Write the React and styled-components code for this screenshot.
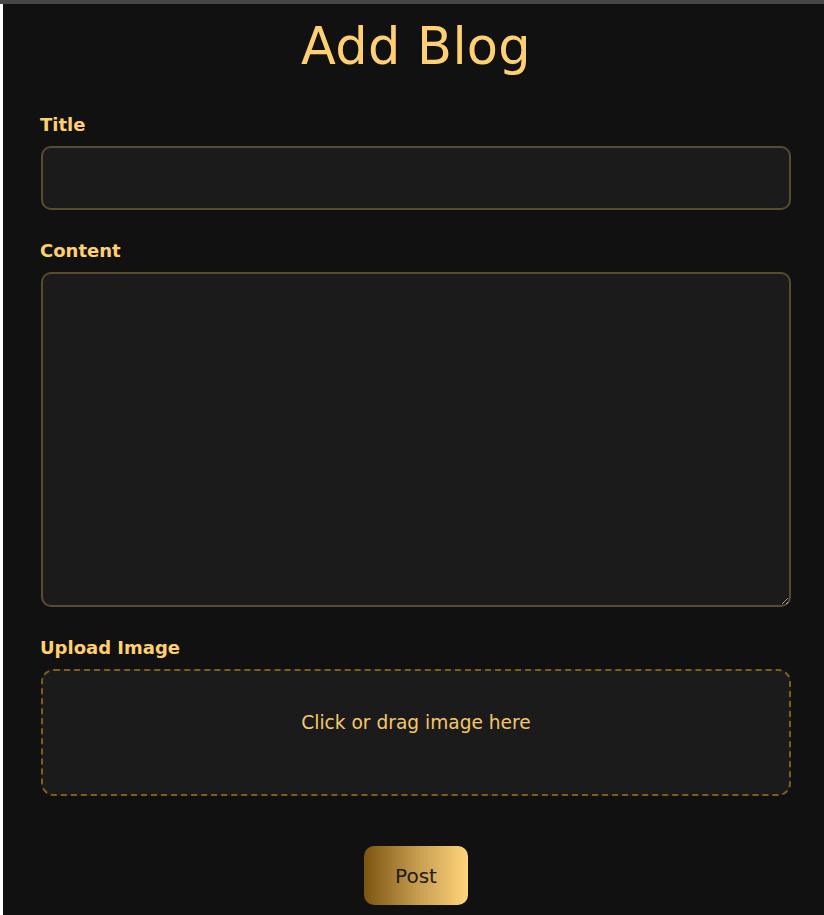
import React from "react";
import styled, { createGlobalStyle } from "styled-components";

const Global = createGlobalStyle`
  html, body { margin: 0; padding: 0; background: #ffffff; }
  body { font-family: "DejaVu Sans", "Noto Sans", sans-serif; overflow: hidden; }
  * { box-sizing: border-box; }
`;

const TopBar = styled.div`
  height: 4px;
  background: #474747;
`;

const Page = styled.main`
  margin-left: 3px;
  min-height: 911px;
  background: #111111;
  padding: 14px 33px 0 38px;
  display: flex;
  flex-direction: column;
`;

const Heading = styled.h1`
  margin: 0 0 38px;
  text-align: center;
  font-weight: 400;
  font-size: 51px;
  line-height: 58px;
  color: #ffd072;
  letter-spacing: 0.3px;
`;

const Form = styled.form`
  display: flex;
  flex-direction: column;
  gap: 30px;
`;

const Group = styled.div`
  display: flex;
  flex-direction: column;
  gap: 10px;
`;

const Label = styled.label`
  font-size: 18px;
  line-height: 22px;
  font-weight: 600;
  color: #ffcf70;
  margin-left: -1px;
`;

const fieldBase = `
  width: 100%;
  background: #1b1b1b;
  border: 2px solid #5a4b2f;
  border-radius: 10px;
  color: #ffd072;
  font-family: inherit;
  font-size: 16px;
  outline: none;
`;

const Input = styled.input`
  ${fieldBase}
  height: 64px;
  padding: 0 14px;
`;

const TextArea = styled.textarea`
  ${fieldBase}
  height: 335px;
  padding: 12px 14px;
  resize: vertical;
  display: block;
`;

const DropZone = styled.div`
  height: 127px;
  background: #1b1b1b;
  border: 2px dashed #7f5e1a;
  border-radius: 13px;
  display: flex;
  align-items: center;
  justify-content: center;
  color: #f5c76a;
  font-size: 18.6px;
  padding-bottom: 20px;
  cursor: pointer;
`;

const Actions = styled.div`
  display: flex;
  justify-content: center;
  padding-top: 20px;
`;

const PostButton = styled.button`
  width: 104px;
  height: 59px;
  border: none;
  border-radius: 10px;
  background: linear-gradient(90deg, #7b5410 0%, #c49a4e 50%, #ffd57c 100%);
  color: #1c1c1c;
  font-family: inherit;
  font-size: 20px;
  cursor: pointer;
`;

export default function App() {
  return (
    <>
      <Global />
      <TopBar />
      <Page>
        <Heading>Add Blog</Heading>
        <Form onSubmit={(e) => e.preventDefault()}>
          <Group>
            <Label htmlFor="title">Title</Label>
            <Input id="title" type="text" />
          </Group>
          <Group>
            <Label htmlFor="content">Content</Label>
            <TextArea id="content" />
          </Group>
          <Group>
            <Label>Upload Image</Label>
            <DropZone>Click or drag image here</DropZone>
          </Group>
          <Actions>
            <PostButton type="submit">Post</PostButton>
          </Actions>
        </Form>
      </Page>
    </>
  );
}
